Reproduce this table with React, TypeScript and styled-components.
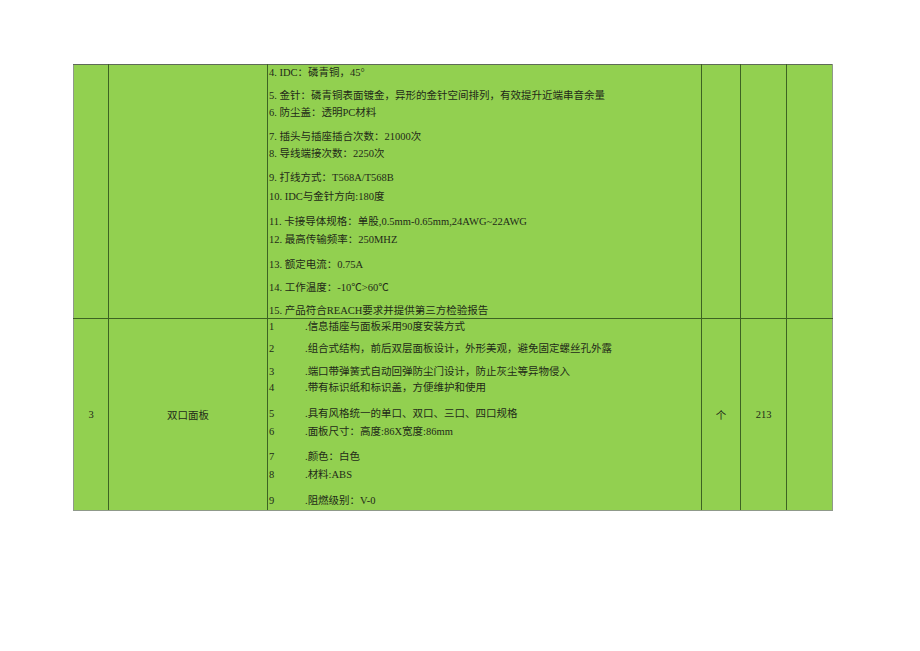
import React from 'react';
import styled, { createGlobalStyle } from 'styled-components';

const GlobalStyle = createGlobalStyle`
  html, body {
    margin: 0;
    padding: 0;
    background: #ffffff;
  }
  body {
    font-family: "Liberation Serif", "Noto Sans CJK SC", serif;
    color: #222a18;
  }
`;

const Page = styled.div`
  width: 920px;
  height: 651px;
  padding: 64px 0 0 73px;
  box-sizing: border-box;
`;

const Sheet = styled.table`
  border-collapse: collapse;
  table-layout: fixed;
  width: 759px;
  background: #92d050;
  font-size: 10.5px;
`;

const Cell = styled.td<{ $align?: 'left' | 'center' }>`
  border: 1px solid #3d6322;
  padding: 0;
  text-align: ${(p) => p.$align || 'center'};
  vertical-align: middle;
  &:first-child {
    border-left-color: #8f998a;
  }
  &:last-child {
    border-right-color: #8f998a;
  }
`;

const SpecCell = styled(Cell)`
  padding: 0 0 0 1px;
  vertical-align: top;
`;

const Line = styled.div<{ $gap: number }>`
  line-height: 15px;
  height: 15px;
  white-space: nowrap;
  margin-top: ${(p) => p.$gap}px;
  display: flex;
`;

const Num = styled.span`
  width: 36px;
  flex: none;
`;

const Top = styled.tr`
  & > td {
    border-top-color: #5f6a58;
  }
`;

const Bottom = styled.tr`
  & > td {
    border-bottom-color: #8f998a;
  }
  & > ${SpecCell} {
    padding-bottom: 2px;
  }
`;

const connectorSpecs: [number, string][] = [
  [0, '4. IDC：磷青铜，45°'],
  [8, '5. 金针：磷青铜表面镀金，异形的金针空间排列，有效提升近端串音余量'],
  [2, '6. 防尘盖：透明PC材料'],
  [9, '7. 插头与插座插合次数：21000次'],
  [2, '8. 导线端接次数：2250次'],
  [9, '9. 打线方式：T568A/T568B'],
  [4, '10. IDC与金针方向:180度'],
  [10, '11. 卡接导体规格：单股,0.5mm-0.65mm,24AWG~22AWG'],
  [3, '12. 最高传输频率：250MHZ'],
  [10, '13. 额定电流：0.75A'],
  [8, '14. 工作温度：-10℃>60℃'],
  [8, '15. 产品符合REACH要求并提供第三方检验报告'],
];

const panelSpecs: [number, string][] = [
  [0, '.信息插座与面板采用90度安装方式'],
  [7, '.组合式结构，前后双层面板设计，外形美观，避免固定螺丝孔外露'],
  [8, '.端口带弹簧式自动回弹防尘门设计，防止灰尘等异物侵入'],
  [1, '.带有标识纸和标识盖，方便维护和使用'],
  [11, '.具有风格统一的单口、双口、三口、四口规格'],
  [3, '.面板尺寸：高度:86X宽度:86mm'],
  [10, '.颜色：白色'],
  [3, '.材料:ABS'],
  [11, '.阻燃级别：V-0'],
];

export default function App() {
  return (
    <Page>
      <GlobalStyle />
      <Sheet>
        <colgroup>
          <col style={{ width: 35 }} />
          <col style={{ width: 159 }} />
          <col style={{ width: 434 }} />
          <col style={{ width: 39 }} />
          <col style={{ width: 46 }} />
          <col style={{ width: 46 }} />
        </colgroup>
        <tbody>
          <Top>
            <Cell />
            <Cell />
            <SpecCell $align="left">
              {connectorSpecs.map(([gap, text]) => (
                <Line key={text} $gap={gap}>
                  {text}
                </Line>
              ))}
            </SpecCell>
            <Cell />
            <Cell />
            <Cell />
          </Top>
          <Bottom>
            <Cell>3</Cell>
            <Cell>双口面板</Cell>
            <SpecCell $align="left">
              {panelSpecs.map(([gap, text], i) => (
                <Line key={text} $gap={gap}>
                  <Num>{i + 1}</Num>
                  {text}
                </Line>
              ))}
            </SpecCell>
            <Cell>个</Cell>
            <Cell>213</Cell>
            <Cell />
          </Bottom>
        </tbody>
      </Sheet>
    </Page>
  );
}
